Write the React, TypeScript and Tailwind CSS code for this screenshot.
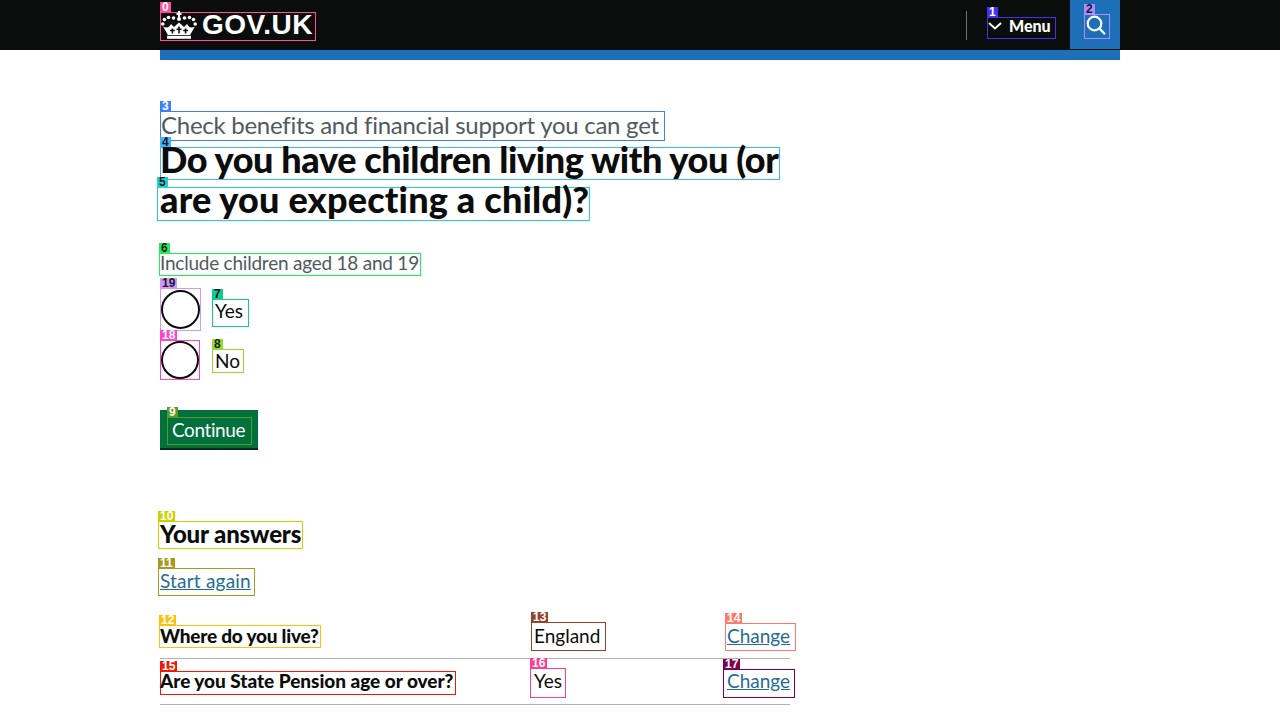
import type { ReactNode } from "react";

const FONT = "font-['Lato','Noto_Sans',sans-serif]";

type TagProps = {
  n: number;
  color: string;
  labelText?: string;
  className?: string;
  children: ReactNode;
};

// outline + number tag drawn over each element
function Tag({ n, color, labelText = "#ffffff", className = "", children }: TagProps) {
  return (
    <div className={`relative border whitespace-nowrap ${className}`} style={{ borderColor: color }}>
      <span
        className="absolute left-[-1px] top-[-11px] h-[10px] min-w-[10px] px-[2px] text-center font-['Liberation_Sans',sans-serif] text-[12px] leading-[10px] font-bold tracking-normal indent-0"
        style={{ backgroundColor: color, color: labelText }}
      >
        {n}
      </span>
      {children}
    </div>
  );
}

function Crown() {
  return (
    <svg width="36" height="28" viewBox="0 0 36 28" fill="#fff">
      <rect x="17" y="0" width="2" height="6" />
      <rect x="15.5" y="2" width="5" height="2" />
      <circle cx="18" cy="8" r="2" />
      <circle cx="12.5" cy="7" r="1.8" />
      <circle cx="23.5" cy="7" r="1.8" />
      <circle cx="7.5" cy="6.5" r="1.8" />
      <circle cx="28.5" cy="6.5" r="1.8" />
      <circle cx="3.5" cy="8.5" r="1.8" />
      <circle cx="32.5" cy="8.5" r="1.8" />
      <circle cx="1.8" cy="13" r="1.8" />
      <circle cx="34.2" cy="13" r="1.8" />
      <path d="M2 15.5c3 1.5 6 1.5 8-2.5l3 3 5-4.5 5 4.5 3-3c2 4 5 4 8 2.5l-5 8.5H7z" />
      <rect x="6" y="24.8" width="24" height="3" />
      <g fill="#0b0c0c">
        <rect x="17.2" y="15.5" width="1.6" height="7" />
        <rect x="15.5" y="17.5" width="5" height="1.6" />
        <rect x="10.6" y="17.5" width="1.6" height="5" />
        <rect x="9" y="18.8" width="4.8" height="1.4" />
        <rect x="23.8" y="17.5" width="1.6" height="5" />
        <rect x="22.2" y="18.8" width="4.8" height="1.4" />
      </g>
    </svg>
  );
}

function Radio({ className }: { className: string }) {
  return <div className={`rounded-full border-2 border-[#0b0c0c] bg-white ${className}`} />;
}

function AnswerRow({
  question,
  answer,
  tags,
  rowClass,
}: {
  question: ReactNode;
  answer: ReactNode;
  tags: ReactNode;
  rowClass: string;
}) {
  return (
    <div className={`grid w-[630px] grid-cols-[370px_193px_67px] items-center border-b border-[#b1b4b6] ${rowClass}`}>
      {question}
      {answer}
      {tags}
    </div>
  );
}

export default function App() {
  return (
    <div className={`h-[720px] overflow-hidden bg-white text-[#0b0c0c] ${FONT}`}>
      <header className="h-[50px] bg-[#0b0c0c]">
        <div className="mx-auto flex h-[50px] w-[960px] items-start">
          <Tag n={0} color="#ff4f9a" className="mt-[12px] flex h-[29px] w-[156px] items-center">
            <div className="flex items-center gap-[5px] text-white">
              <div className="-mt-[3px]">
                <Crown />
              </div>
              <span className="-mt-[3px] font-['Liberation_Sans',sans-serif] text-[28px] leading-[28px] font-bold tracking-[0.5px]">GOV.UK</span>
            </div>
          </Tag>
          <div className="mt-[11px] ml-[650px] h-[29px] w-px bg-[#6f7274]" />
          <Tag n={1} color="#4433ee" className="mt-[17px] ml-[20px] flex h-[22px] w-[69px] items-center text-white">
            <svg width="14" height="8" viewBox="0 0 14 8" className="mr-[7px] -mt-[4px]">
              <path d="M1 1l6 5.5L13 1" fill="none" stroke="#fff" strokeWidth="2" />
            </svg>
            <span className="-mt-[4px] text-[16px] leading-[20px] font-black">Menu</span>
          </Tag>
          <div className="ml-[14px] flex h-[49px] w-[50px] items-start bg-[#1d70b8] pt-[14px] pl-[14px]">
            <Tag n={2} color="#b08cff" labelText="#1a1a1a" className="h-[25px] w-[26px]">
              <svg width="24" height="23" viewBox="0 0 24 23" fill="none" stroke="#fff" strokeWidth="2.2">
                <circle cx="9.5" cy="8.5" r="6.8" />
                <path d="M14.5 13.5l5.5 5.8" />
              </svg>
            </Tag>
          </div>
        </div>
      </header>

      <div className="mx-auto w-[960px]">
        <div className="h-[10px] bg-[#1d70b8]" />

        <main className="flex flex-col items-start">
          <Tag n={3} color="#3d7eff" className="mt-[51px] h-[30px] w-[505px] text-[24px] leading-[26px] tracking-[-0.27px] text-[#505a5f]">
            Check benefits and financial support you can get
          </Tag>
          <Tag n={4} color="#3fb4ff" labelText="#1a1a1a" className="mt-[6px] h-[33px] w-[620px] indent-[-1px] text-[36px] leading-[23px] font-black tracking-[-0.37px]">
            Do you have children living with you (or
          </Tag>
          <Tag n={5} color="#26cfcf" labelText="#1a1a1a" className="mt-[7px] -ml-[3px] h-[34px] w-[433px] pl-[2px] text-[36px] leading-[23px] font-black tracking-[0.2px]">
            are you expecting a child)?
          </Tag>
          <Tag n={6} color="#1eef55" labelText="#1a1a1a" className="mt-[32px] -ml-px h-[23px] w-[262px] text-[19px] leading-[18px] tracking-[-0.23px] text-[#505a5f]">
            Include children aged 18 and 19
          </Tag>

          <div className="mt-[12px] flex">
            <Tag n={19} color="#cc99ff" labelText="#1a1a1a" className="h-[43px] w-[41px] pt-[1px]">
              <Radio className="h-[39px] w-[39px]" />
            </Tag>
            <Tag n={7} color="#10cc90" labelText="#1a1a1a" className="mt-[11px] ml-[11px] h-[28px] w-[37px] pl-[2px] text-[19px] leading-[22px]">
              Yes
            </Tag>
          </div>
          <div className="mt-[9px] flex">
            <Tag n={18} color="#ff44cc" className="h-[40px] w-[40px]">
              <Radio className="h-[38px] w-[38px]" />
            </Tag>
            <Tag n={8} color="#90dd30" labelText="#1a1a1a" className="mt-[9px] ml-[12px] h-[24px] w-[32px] pl-[2px] text-[19px] leading-[22px]">
              No
            </Tag>
          </div>

          <div className="mt-[30px] h-[40px] w-[98px] bg-[#00703c] pt-[7px] pl-[7px] shadow-[inset_0_-2px_0_#002d18]">
            <Tag n={9} color="#5a9a20" className="h-[28px] w-[85px] pl-[4px] text-[19px] leading-[24px] tracking-[-0.4px] text-white">
              Continue
            </Tag>
          </div>

          <Tag n={10} color="#c8d400" className="mt-[71px] -ml-[2px] h-[28px] w-[145px] pl-[1px] text-[24px] leading-[24px] font-black tracking-[-0.15px]">
            Your answers
          </Tag>
          <Tag n={11} color="#a89a20" className="mt-[19px] -ml-[2px] h-[28px] w-[97px] pl-[1px] text-[19px] leading-[24px] tracking-[0.2px] text-[#256c95] underline">
            Start again
          </Tag>

          <AnswerRow
            rowClass="mt-[26px] h-[37px] pb-[10px]"
            question={
              <Tag n={12} color="#ffc107" className="-ml-px h-[23px] w-[162px] text-[19px] leading-[20px] font-black tracking-[-0.22px]">
                Where do you live?
              </Tag>
            }
            answer={
              <Tag n={13} color="#95452e" className="ml-px h-[29px] w-[75px] pl-[2px] text-[19px] leading-[25px]">
                England
              </Tag>
            }
            tags={
              <Tag n={14} color="#ff7a6a" className="ml-[2px] h-[28px] w-[71px] pl-[1px] text-[19px] leading-[24px] text-[#256c95] underline">
                Change
              </Tag>
            }
          />
          <AnswerRow
            rowClass="mt-[9px] h-[37px] pb-[6px]"
            question={
              <Tag n={15} color="#f01800" className="h-[24px] w-[296px] indent-[-1px] text-[19px] leading-[18px] font-black tracking-[-0.03px]">
                Are you State Pension age or over?
              </Tag>
            }
            answer={
              <Tag n={16} color="#ff3d98" className="h-[30px] w-[36px] pl-[3px] text-[19px] leading-[24px]">
                Yes
              </Tag>
            }
            tags={
              <Tag n={17} color="#800050" className="h-[29px] w-[72px] pl-[3px] text-[19px] leading-[22px] text-[#256c95] underline">
                Change
              </Tag>
            }
          />
        </main>
      </div>
    </div>
  );
}
